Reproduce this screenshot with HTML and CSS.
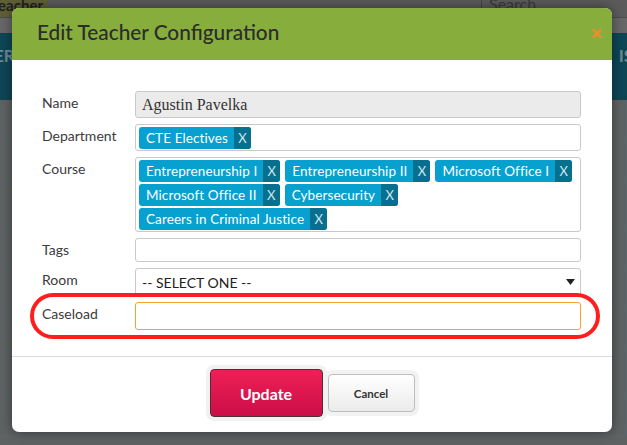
FILE: index.html
```html
<!DOCTYPE html>
<html>
<head>
<meta charset="utf-8">
<link rel="stylesheet" href="styles.css">
</head>
<body>
<div class="page">
  <div class="topbar">
    <div class="tab"><span>Teacher</span></div>
    <div class="search">Search</div>
  </div>
  <div class="subbar"></div>
  <div class="band"><span>ER</span><span>IS</span></div>
  <div class="table">
    <div class="trow"><i></i><i></i><i></i><i></i><i></i></div>
    <div class="trow"><i></i><i></i><i></i><i></i><i></i></div>
    <div class="trow"><i></i><i></i><i></i><i></i><i></i></div>
    <div class="trow"><i></i><i></i><i></i><i></i><i></i></div>
    <div class="trow"><i></i><i></i><i></i><i></i><i></i></div>
    <div class="trow"><i></i><i></i><i></i><i></i><i></i></div>
    <div class="trow"><i></i><i></i><i></i><i></i><i></i></div>
    <div class="trow"><i></i><i></i><i></i><i></i><i></i></div>
  </div>
</div>

<div class="modal">
  <div class="modal-header">
    <h1 class="title">Edit Teacher Configuration</h1>
    <svg class="close" width="10" height="9" viewBox="0 0 10 9"><path d="M1.5 1 L8.5 8 M8.5 1 L1.5 8" stroke="#f28b2c" stroke-width="2.4" stroke-linecap="round"/></svg>
  </div>
  <div class="modal-body">
    <div class="form">
      <label class="lbl">Name</label>
      <div class="field readonly">Agustin Pavelka</div>

      <label class="lbl">Department</label>
      <div class="field tagbox">
        <span class="tag"><span class="tx">CTE Electives</span><span class="x">X</span></span>
      </div>

      <label class="lbl">Course</label>
      <div class="field tagbox course">
        <span class="tag"><span class="tx">Entrepreneurship I</span><span class="x">X</span></span>
        <span class="tag"><span class="tx">Entrepreneurship II</span><span class="x">X</span></span>
        <span class="tag"><span class="tx">Microsoft Office I</span><span class="x">X</span></span>
        <span class="tag"><span class="tx">Microsoft Office II</span><span class="x">X</span></span>
        <span class="tag"><span class="tx">Cybersecurity</span><span class="x">X</span></span>
        <span class="tag"><span class="tx">Careers in Criminal Justice</span><span class="x">X</span></span>
      </div>

      <label class="lbl">Tags</label>
      <div class="field tags"></div>

      <label class="lbl">Room</label>
      <div class="field select"><span>-- SELECT ONE --</span><svg width="9" height="6" viewBox="0 0 9 6"><path d="M0 0 H9 L4.5 6 Z" fill="#222"/></svg></div>

      <label class="lbl">Caseload</label>
      <div class="field focus"></div>
    </div>
  </div>
  <div class="modal-footer">
    <button class="btn update">Update</button>
    <button class="btn cancel">Cancel</button>
  </div>
  <div class="ring"></div>
</div>
</body>
</html>
```

FILE: styles.css
```css
* { box-sizing: border-box; }
html, body { margin: 0; padding: 0; }
body {
  width: 627px;
  height: 445px;
  overflow: hidden;
  background: #5e6262;
  font-family: Lato, "Open Sans", sans-serif;
  position: relative;
}

/* background page (dimmed) */
.page { display: flex; flex-direction: column; height: 445px; }
.topbar {
  height: 18px;
  background: #5b5b5b;
  display: flex;
  border-bottom: 1px solid #4d4d4d;
}
.tab {
  width: 48px;
  background: #5f5f36;
  color: #222;
  font-size: 15px;
  font-weight: 700;
  line-height: 10px;
  display: flex;
  justify-content: flex-end;
  overflow: hidden;
  padding-right: 5px;
  white-space: nowrap;
}
.tab span { flex: none; }
.search {
  margin-left: 433px;
  border-left: 1px solid #444;
  color: #3a3a3a;
  font-size: 16px;
  line-height: 8px;
  padding-left: 7px;
  flex: 1;
  overflow: hidden;
}
.subbar { height: 15px; background: #676767; }
.band {
  height: 67px;
  background: #0e4656;
  display: flex;
  justify-content: space-between;
  align-items: center;
  color: #6f8a93;
  font-weight: 700;
  font-size: 17px;
  padding: 0 0 22px 0;
}
.band span:first-child { margin-left: -6px; }
.band span:last-child { margin-right: -6px; }
.table { flex: 1; display: flex; flex-direction: column; background: #5e6262; }
.trow {
  height: 42px;
  flex: none;
  display: grid;
  grid-template-columns: 95px 225px 75px 205px 1fr;
  border-bottom: 1px solid #55686b;
}
.trow i { border-right: 1px solid #55686b; }

/* modal */
.modal {
  position: absolute;
  left: 12px;
  top: 8px;
  width: 600px;
  height: 424px;
  background: #fff;
  border-radius: 7px;
  overflow: hidden;
  display: flex;
  flex-direction: column;
  box-shadow: 0 0 12px rgba(0,0,0,0.45);
}
.modal-header {
  height: 52px;
  flex: none;
  background: #87ae3d;
  display: flex;
  align-items: center;
  justify-content: space-between;
  padding: 0 10px 0 25px;
}
.title {
  margin: 0;
  font-size: 20.8px;
  font-weight: 500;
  color: #2c2c2c;
  padding-bottom: 5px;
}
.close { margin-top: -2px; }

.modal-body {
  height: 296px;
  flex: none;
  padding: 31px 31px 0 30px;
}
.form {
  display: grid;
  grid-template-columns: 93px 1fr;
  row-gap: 6px;
}
.lbl {
  font-size: 14px;
  color: #3b3b3b;
  padding-top: 4px;
  line-height: 16px;
}
.field {
  border: 1px solid #c9c9c9;
  border-radius: 3px;
  background: #fff;
}
.readonly {
  height: 27px;
  background: #ebebeb;
  font-family: "Liberation Serif", "DejaVu Serif", serif;
  font-size: 16px;
  color: #333;
  padding: 3px 6px;
  line-height: 20px;
}
.tagbox {
  display: flex;
  flex-wrap: wrap;
  align-content: flex-start;
  column-gap: 5px;
  row-gap: 2px;
  padding: 2px 3px;
  height: 27px;
}
.course { height: 75px; padding-bottom: 1px; }
.tag {
  display: inline-flex;
  height: 22px;
  border-radius: 3px;
  overflow: hidden;
  background: #08a0cf;
  color: #fff;
  font-size: 13.5px;
  letter-spacing: 0.1px;
  line-height: 22px;
  white-space: nowrap;
}
.tag .tx { padding: 0 6px 0 7px; }
.tag .x {
  width: 17px;
  text-align: center;
  background: #07708e;
  color: #cfe6ee;
  font-size: 13px;
  letter-spacing: 0;
}
.tags { height: 24px; }
.select {
  height: 28px;
  display: flex;
  align-items: center;
  justify-content: space-between;
  padding: 0 5px 0 6px;
  font-size: 14px;
  color: #222;
}
.focus { height: 28px; border-color: #f6a233; }

.modal-footer {
  flex: 1;
  border-top: 1px solid #dcdcdc;
  display: flex;
  align-items: center;
  justify-content: center;
  gap: 5px;
  padding-bottom: 3px;
}
.btn {
  font-family: Lato, "Open Sans", sans-serif;
  border-radius: 4px;
  cursor: pointer;
}
.update {
  width: 113px;
  height: 48px;
  background: linear-gradient(#ee2056, #cc0d48);
  border: 1px solid #4a3036;
  color: #fff;
  font-size: 16px;
  font-weight: 700;
  box-shadow: 0 0 0 4px #f1f1f1;
}
.cancel {
  width: 87px;
  height: 38px;
  background: linear-gradient(#ffffff, #ebebeb);
  border: 1px solid #bdbdbd;
  color: #333;
  font-size: 11.5px;
  font-weight: 700;
  box-shadow: 0 0 0 4px #f2f2f2;
}
.ring {
  position: absolute;
  left: 18px;
  top: 285px;
  width: 570px;
  height: 46px;
  border: 4px solid #ff1d1d;
  border-radius: 24px;
}
```
